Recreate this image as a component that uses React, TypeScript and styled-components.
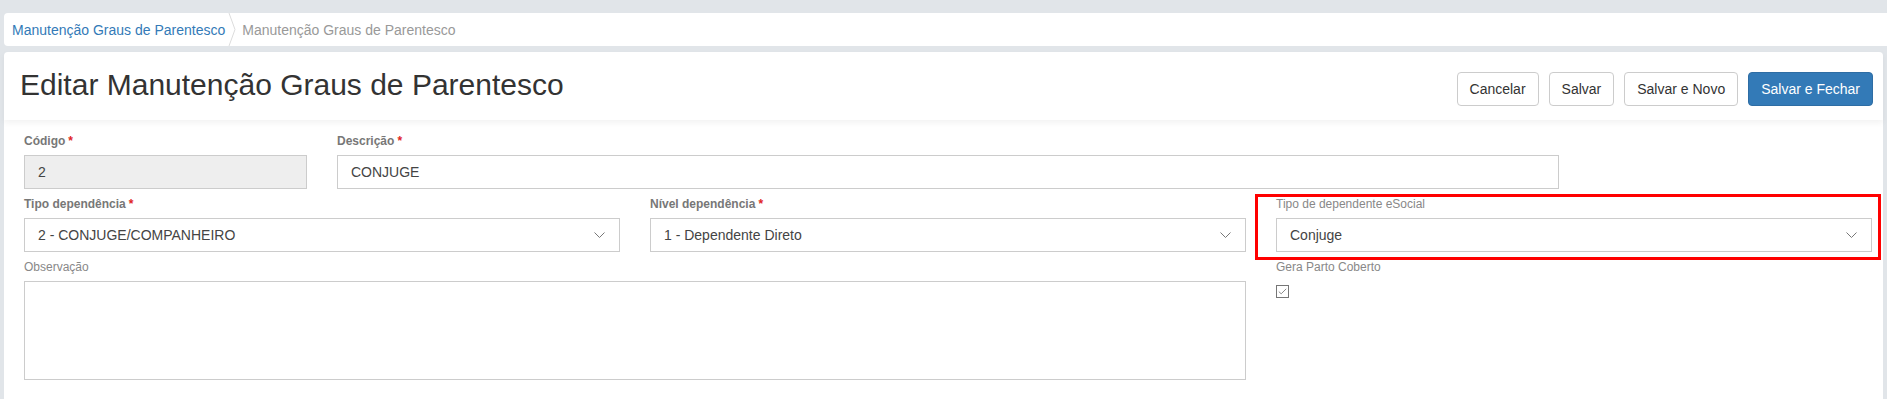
import styled, { createGlobalStyle } from 'styled-components';

const GlobalStyle = createGlobalStyle`
  html, body { margin: 0; padding: 0; }
  body {
    background: #e1e5e9;
    font-family: 'Liberation Sans', Arial, sans-serif;
    color: #333;
  }
  * { box-sizing: border-box; }
`;

const App = () => {
  return (
    <>
      <GlobalStyle />
      <Page>
        <Breadcrumb>
          <CrumbLink>Manutenção Graus de Parentesco</CrumbLink>
          <CrumbSep width="8" height="33" viewBox="0 0 8 33" aria-hidden="true">
            <polyline points="1,0 7,16.5 1,33" fill="none" stroke="#dcdcdc" strokeWidth="1" />
          </CrumbSep>
          <CrumbCurrent>Manutenção Graus de Parentesco</CrumbCurrent>
        </Breadcrumb>

        <Card>
          <Header>
            <Title>Editar Manutenção Graus de Parentesco</Title>
            <Actions>
              <Button>Cancelar</Button>
              <Button>Salvar</Button>
              <Button>Salvar e Novo</Button>
              <Button $primary>Salvar e Fechar</Button>
            </Actions>
          </Header>

          <Form>
            <Field $span={2}>
              <Label $strong>Código<Req>*</Req></Label>
              <Input value="2" readOnly $disabled />
            </Field>
            <Field $span={8}>
              <Label $strong>Descrição<Req>*</Req></Label>
              <Input value="CONJUGE" readOnly />
            </Field>

            <Field $span={4}>
              <Label $strong>Tipo dependência<Req>*</Req></Label>
              <Select value="2 - CONJUGE/COMPANHEIRO" />
            </Field>
            <Field $span={4}>
              <Label $strong>Nível dependência<Req>*</Req></Label>
              <Select value="1 - Dependente Direto" />
            </Field>
            <Field $span={4} $highlight>
              <Label>Tipo de dependente eSocial</Label>
              <Select value="Conjuge" />
            </Field>

            <Field $span={8}>
              <Label>Observação</Label>
              <TextArea readOnly />
            </Field>
            <Field $span={4}>
              <Label>Gera Parto Coberto</Label>
              <CheckBox>
                <svg width="9" height="7" viewBox="0 0 9 7" aria-hidden="true">
                  <polyline points="0.8,3.6 3.2,5.8 8.2,0.8" fill="none" stroke="#8a8a8a" strokeWidth="1" />
                </svg>
              </CheckBox>
            </Field>
          </Form>
        </Card>
      </Page>
    </>
  );
};

const Select = ({ value }: { value: string }) => (
  <SelectControl>
    <span>{value}</span>
    <svg width="11" height="6" viewBox="0 0 11 6" aria-hidden="true">
      <polyline points="0.5,0.5 5.5,5.5 10.5,0.5" fill="none" stroke="#777" strokeWidth="1" />
    </svg>
  </SelectControl>
);

// --- estilos ---

const Page = styled.div`
  min-height: 100vh;
  display: flex;
  flex-direction: column;
  padding: 13px 0 0 4px;
`;

const Breadcrumb = styled.div`
  height: 33px;
  margin-bottom: 6px;
  display: flex;
  align-items: center;
  padding: 0 8px;
  background: #fff;
  border-radius: 4px 0 0 4px;
  font-size: 14px;
`;

const CrumbLink = styled.span`
  color: #337ab7;
`;

const CrumbSep = styled.svg`
  margin: 0 6px 0 3px;
  flex-shrink: 0;
`;

const CrumbCurrent = styled.span`
  color: #999;
`;

const Card = styled.div`
  flex: 1;
  margin-right: 4px;
  background: #fff;
  border-radius: 4px 4px 0 0;
`;

const Header = styled.div`
  display: flex;
  justify-content: space-between;
  align-items: flex-start;
  padding: 16px 10px 14px 16px;
  box-shadow: 0 3px 6px rgba(0, 0, 0, 0.05);
`;

const Title = styled.h1`
  margin: 0;
  font-size: 30px;
  font-weight: 400;
  line-height: 34px;
  color: #333;
`;

const Actions = styled.div`
  display: flex;
  gap: 10px;
  margin-top: 4px;
`;

const Button = styled.button<{ $primary?: boolean }>`
  height: 34px;
  padding: 0 12px;
  font-family: 'Liberation Sans', Arial, sans-serif;
  font-size: 14px;
  border-radius: 4px;
  cursor: pointer;
  border: 1px solid ${(p) => (p.$primary ? '#2e6da4' : '#ccc')};
  background: ${(p) => (p.$primary ? '#337ab7' : '#fff')};
  color: ${(p) => (p.$primary ? '#fff' : '#333')};
`;

const Form = styled.div`
  display: grid;
  grid-template-columns: repeat(12, 1fr);
  column-gap: 30px;
  row-gap: 7px;
  padding: 13px 11px 0 20px;
`;

const Field = styled.div<{ $span: number; $highlight?: boolean }>`
  grid-column: span ${(p) => p.$span};
  display: flex;
  flex-direction: column;
  align-items: flex-start;
  position: relative;

  ${(p) =>
    p.$highlight &&
    `
    &::after {
      content: '';
      position: absolute;
      left: -21px;
      right: -9px;
      top: -2px;
      bottom: -8px;
      border: 3px solid #f00;
      pointer-events: none;
    }
  `}
`;

const Label = styled.label<{ $strong?: boolean }>`
  font-size: 12px;
  line-height: 17px;
  margin-bottom: 5px;
  font-weight: ${(p) => (p.$strong ? 700 : 400)};
  color: ${(p) => (p.$strong ? '#777' : '#888')};
`;

const Req = styled.span`
  color: #e02424;
  margin-left: 3px;
`;

const Input = styled.input<{ $disabled?: boolean }>`
  width: 100%;
  height: 34px;
  padding: 0 13px;
  border: 1px solid #ccc;
  border-radius: 0;
  outline: none;
  font-family: 'Liberation Sans', Arial, sans-serif;
  font-size: 14px;
  color: #444;
  background: ${(p) => (p.$disabled ? '#eee' : '#fff')};
`;

const SelectControl = styled.div`
  width: 100%;
  height: 34px;
  display: flex;
  align-items: center;
  justify-content: space-between;
  padding: 0 14px 0 13px;
  border: 1px solid #ccc;
  font-size: 14px;
  color: #444;
  background: #fff;
`;

const TextArea = styled.textarea`
  width: 100%;
  height: 99px;
  border: 1px solid #ccc;
  border-radius: 0;
  resize: none;
  outline: none;
  display: block;
  font-family: 'Liberation Sans', Arial, sans-serif;
`;

const CheckBox = styled.span`
  width: 13px;
  height: 13px;
  margin-top: 4px;
  border: 1px solid #767676;
  display: flex;
  align-items: center;
  justify-content: center;
  background: #fff;
`;

export default App;
